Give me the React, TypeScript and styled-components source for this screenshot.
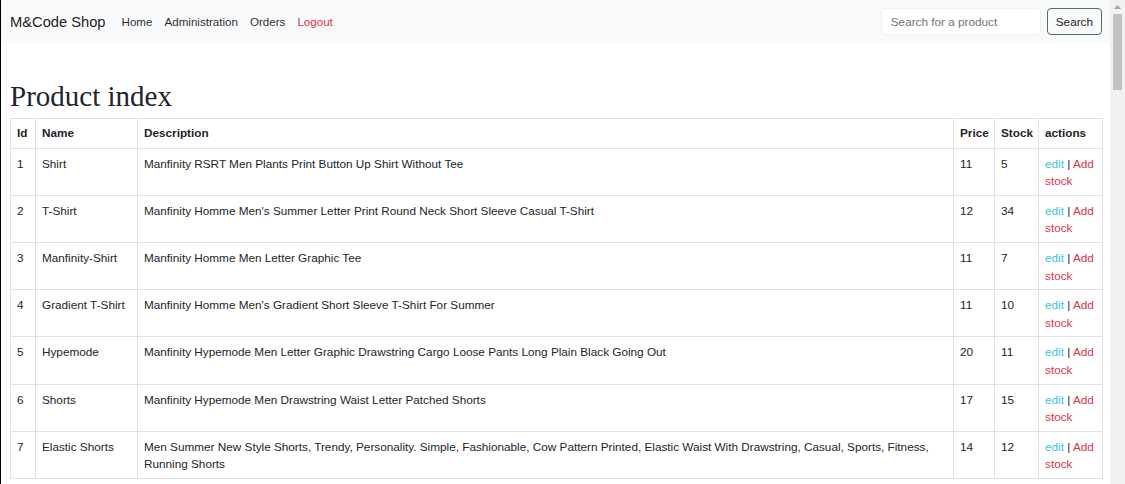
import React from "react";
import styled, { createGlobalStyle } from "styled-components";

const GlobalStyle = createGlobalStyle`
  html, body { margin: 0; padding: 0; overflow: hidden; background: #fff; }
  body { font-family: "Liberation Sans", Arial, sans-serif; color: #212529; }
  * { box-sizing: border-box; }
`;

const Frame = styled.div`
  display: flex;
  width: 1125px;
  height: 484px;
  overflow: hidden;
  border-left: 1px solid #000;
`;

const Main = styled.div`
  flex: 1;
  min-width: 0;
  display: flex;
  flex-direction: column;
`;

const Navbar = styled.nav`
  flex: none;
  display: flex;
  align-items: center;
  height: 43px;
  padding: 0 8px 0 9px;
  background: #f8f9fa;
`;

const Brand = styled.a`
  font-size: 14.7px;
  color: rgba(0, 0, 0, 0.9);
  margin-right: 10px;
  text-decoration: none;
`;

const NavLink = styled.a<{ $danger?: boolean }>`
  font-size: 11.6px;
  padding: 0 6px;
  color: ${(p) => (p.$danger ? "#dc3545" : "rgba(0,0,0,0.85)")};
  text-decoration: none;
`;

const SearchForm = styled.form`
  margin-left: auto;
  display: flex;
  gap: 6px;
`;

const SearchInput = styled.input`
  width: 160px;
  height: 27px;
  border: 1px solid #eef0f2;
  border-radius: 4px;
  padding: 0 9px;
  font-family: "Liberation Sans", Arial, sans-serif;
  font-size: 11.75px;
  color: #212529;
  background: #fff;
  &::placeholder { color: #6c757d; }
`;

const SearchButton = styled.button`
  height: 27px;
  padding: 0 8px;
  border: 1px solid #4f6f62;
  border-radius: 4px;
  background: transparent;
  font-family: "Liberation Sans", Arial, sans-serif;
  font-size: 11.75px;
  color: #212529;
`;

const Content = styled.div`
  flex: none;
  padding: 0 7px 0 9px;
`;

const Title = styled.h1`
  font-family: "Liberation Serif", "Times New Roman", serif;
  font-weight: 400;
  font-size: 29px;
  line-height: 35px;
  margin: 36px 0 4px;
  color: #212529;
`;

const Table = styled.table`
  width: 100%;
  border-collapse: collapse;
  table-layout: fixed;
  font-size: 11.75px;
  line-height: 17.6px;
`;

const Th = styled.th`
  text-align: left;
  font-weight: 700;
  padding: 5px 6px 6px;
  border: 1px solid #dee2e6;
  vertical-align: bottom;
`;

const Td = styled.td`
  padding: 6px 6px 5px;
  border: 1px solid #dee2e6;
  vertical-align: top;
`;

const EditLink = styled.a`
  color: #3cc4e2;
  text-decoration: none;
`;

const AddLink = styled.a`
  color: #dc3545;
  text-decoration: none;
`;

const ScrollTrack = styled.div`
  width: 15px;
  flex: none;
  background: #f1f1f1;
  display: flex;
  flex-direction: column;
  align-items: center;
`;

const ScrollArrow = styled.div`
  height: 14px;
  display: flex;
  align-items: center;
  justify-content: center;
`;

const ScrollThumb = styled.div`
  width: 9px;
  height: 76px;
  background: #c1c1c1;
`;

const products = [
  { id: 1, name: "Shirt", desc: "Manfinity RSRT Men Plants Print Button Up Shirt Without Tee", price: 11, stock: 5 },
  { id: 2, name: "T-Shirt", desc: "Manfinity Homme Men's Summer Letter Print Round Neck Short Sleeve Casual T-Shirt", price: 12, stock: 34 },
  { id: 3, name: "Manfinity-Shirt", desc: "Manfinity Homme Men Letter Graphic Tee", price: 11, stock: 7 },
  { id: 4, name: "Gradient T-Shirt", desc: "Manfinity Homme Men's Gradient Short Sleeve T-Shirt For Summer", price: 11, stock: 10 },
  { id: 5, name: "Hypemode", desc: "Manfinity Hypemode Men Letter Graphic Drawstring Cargo Loose Pants Long Plain Black Going Out", price: 20, stock: 11 },
  { id: 6, name: "Shorts", desc: "Manfinity Hypemode Men Drawstring Waist Letter Patched Shorts", price: 17, stock: 15 },
  { id: 7, name: "Elastic Shorts", desc: "Men Summer New Style Shorts, Trendy, Personality. Simple, Fashionable, Cow Pattern Printed, Elastic Waist With Drawstring, Casual, Sports, Fitness, Running Shorts", price: 14, stock: 12 },
];

export default function App() {
  return (
    <>
      <GlobalStyle />
      <Frame>
        <Main>
          <Navbar>
            <Brand href="#">M&amp;Code Shop</Brand>
            <NavLink href="#">Home</NavLink>
            <NavLink href="#">Administration</NavLink>
            <NavLink href="#">Orders</NavLink>
            <NavLink href="#" $danger>Logout</NavLink>
            <SearchForm onSubmit={(e) => e.preventDefault()}>
              <SearchInput placeholder="Search for a product" />
              <SearchButton type="submit">Search</SearchButton>
            </SearchForm>
          </Navbar>
          <Content>
            <Title>Product index</Title>
            <Table>
              <colgroup>
                <col style={{ width: 25 }} />
                <col style={{ width: 102 }} />
                <col />
                <col style={{ width: 41 }} />
                <col style={{ width: 44 }} />
                <col style={{ width: 64 }} />
              </colgroup>
              <thead>
                <tr>
                  <Th>Id</Th>
                  <Th>Name</Th>
                  <Th>Description</Th>
                  <Th>Price</Th>
                  <Th>Stock</Th>
                  <Th>actions</Th>
                </tr>
              </thead>
              <tbody>
                {products.map((p) => (
                  <tr key={p.id}>
                    <Td>{p.id}</Td>
                    <Td>{p.name}</Td>
                    <Td>{p.desc}</Td>
                    <Td>{p.price}</Td>
                    <Td>{p.stock}</Td>
                    <Td>
                      <EditLink href="#">edit</EditLink> | <AddLink href="#">Add stock</AddLink>
                    </Td>
                  </tr>
                ))}
              </tbody>
            </Table>
          </Content>
        </Main>
        <ScrollTrack>
          <ScrollArrow>
            <svg width="7" height="4" viewBox="0 0 7 4">
              <path d="M0 4 L3.5 0 L7 4 Z" fill="#a3a3a3" />
            </svg>
          </ScrollArrow>
          <ScrollThumb />
        </ScrollTrack>
      </Frame>
    </>
  );
}
